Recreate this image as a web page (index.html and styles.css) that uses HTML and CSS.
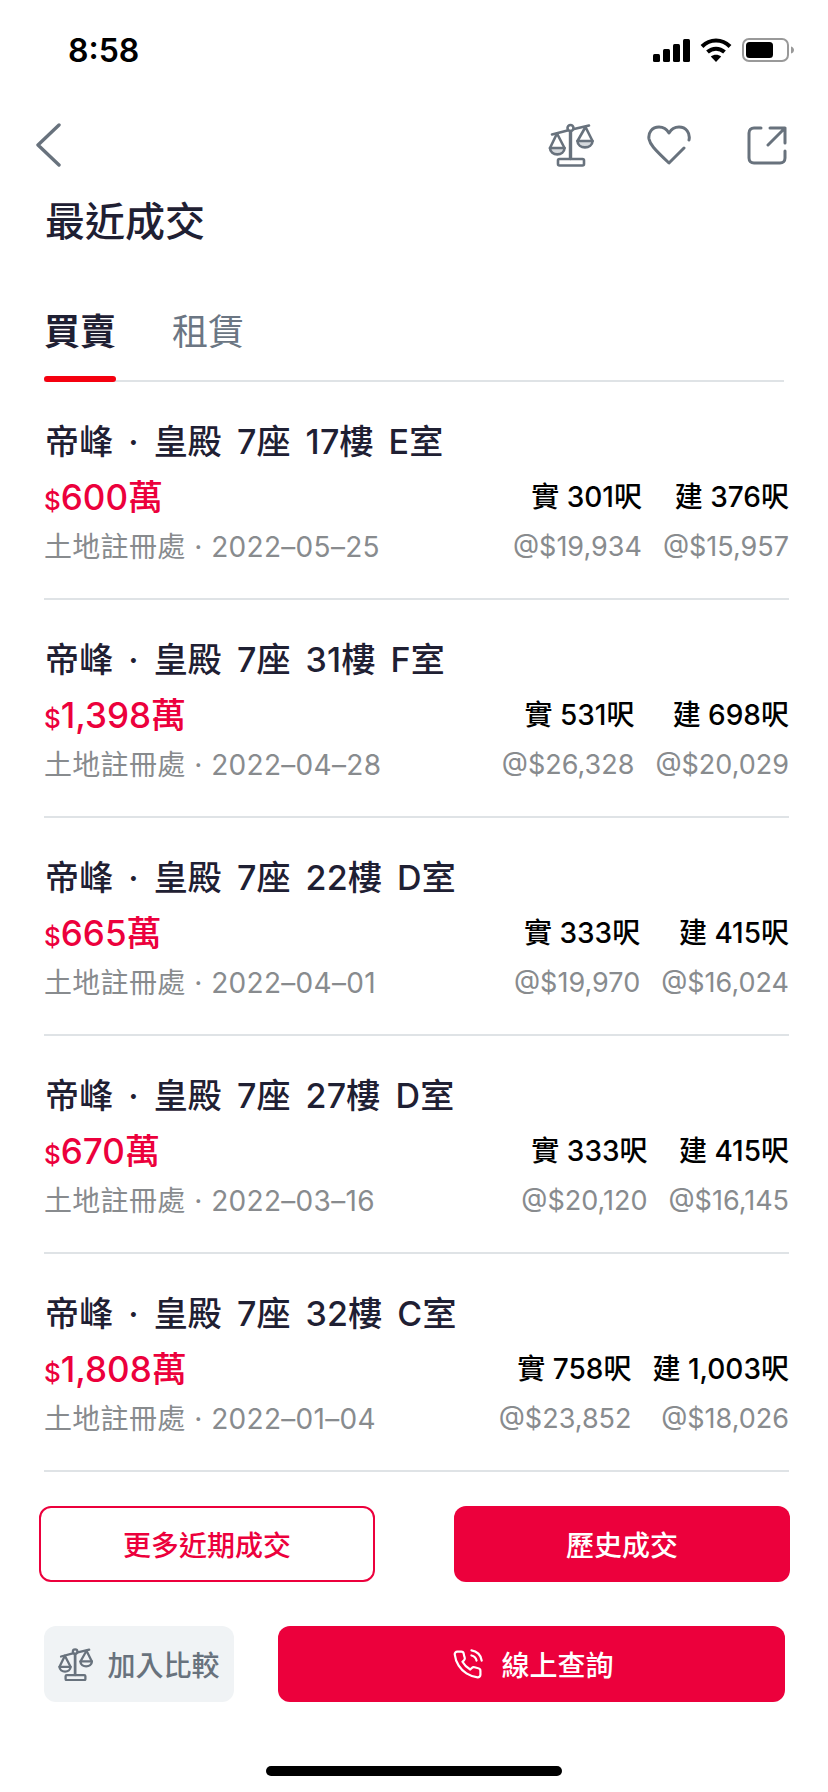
FILE: index.html
```html
<!DOCTYPE html>
<html>
<head>
    <title>最近成交</title>
    <link rel="stylesheet" href="styles.css">
</head>
<body>
    <div class="status-bar">
        <span class="time">8:58</span>
        <div class="status-icons">
            <svg width="37" height="23" viewBox="0 0 37 23" fill="#000">
                <rect x="0" y="15" width="7" height="8" rx="1.5"/>
                <rect x="10" y="10" width="7" height="13" rx="1.5"/>
                <rect x="20" y="5" width="7" height="18" rx="1.5"/>
                <rect x="30" y="0" width="7" height="23" rx="1.5"/>
            </svg>
            <svg width="32" height="24" viewBox="0 0 32 24" fill="none" stroke="#000" stroke-width="4">
                <path d="M2 8.5C10 0.5 22 0.5 30 8.5"/>
                <path d="M7.5 14C12.5 9.5 19.5 9.5 24.5 14"/>
                <path d="M16 24L10.8 18.6C13.8 16 18.2 16 21.2 18.6Z" fill="#000" stroke="none"/>
            </svg>
            <svg width="52" height="24" viewBox="0 0 52 24">
                <rect x="1" y="1" width="45" height="22" rx="6" fill="none" stroke="#999" stroke-width="2"/>
                <rect x="4" y="4" width="27" height="16" rx="3.5" fill="#000"/>
                <path d="M49 8.5C51 9 52 10.5 52 12S51 15 49 15.5Z" fill="#999"/>
            </svg>
        </div>
    </div>

    <div class="nav">
        <svg class="back" width="25" height="44" viewBox="0 0 25 44" fill="none" stroke="#68727d" stroke-width="3.4" stroke-linecap="round" stroke-linejoin="round">
            <path d="M23 2L2 22L23 42"/>
        </svg>
        <div class="nav-icons">
            <svg class="scales" width="46" height="44" viewBox="0 0 46 43" fill="none" stroke="#68727d" stroke-width="2.6" stroke-linejoin="round" stroke-linecap="round">
                <path d="M2 24.5H16.5C16.5 33 2 33 2 24.5Z" fill="#d5d9dd"/>
                <path d="M29.5 17.5H44.5C44.5 26 29.5 26 29.5 17.5Z" fill="#d5d9dd"/>
                <path d="M2 24.5L9 10L16.5 24.5M29.5 17.5L37.5 3.5L44.5 17.5"/>
                <path d="M4 11L19.5 7M26 5.5L41 2"/>
                <circle cx="22.5" cy="4.5" r="3"/>
                <path d="M22.5 8V35" stroke-width="3.4"/>
                <rect x="10" y="35.5" width="26" height="6.5" rx="1.5"/>
            </svg>
            <svg width="44" height="40" viewBox="0 0 44 40" fill="none" stroke="#68727d" stroke-width="3" stroke-linecap="round" stroke-linejoin="round">
                <path d="M42 15C43.5 8 39 2 32 2C27.5 2 24 4.5 22 8C20 4.5 16.5 2 12 2C5 2 1 7.5 2 14C3 19 6 23 22 38L37 23"/>
            </svg>
            <svg width="40" height="39" viewBox="0 0 40 39" fill="none" stroke="#68727d" stroke-width="3" stroke-linecap="round" stroke-linejoin="round">
                <path d="M14 2H7C4 2 2 4 2 7V32C2 35 4 37 7 37H33C36 37 38 35 38 32V25"/>
                <path d="M23 2H38V17M38 2L21 19"/>
            </svg>
        </div>
    </div>

    <h1 class="page-title">最近成交</h1>

    <div class="tabs">
        <span class="tab active">買賣</span>
        <span class="tab">租賃</span>
    </div>

    <div class="deal-list">
        <div class="deal">
            <div class="deal-title">帝峰 · 皇殿 7座 17樓 E室</div>
            <div class="deal-info">
                <div class="price"><small>$</small>600萬</div>
                <div class="area">實 301呎</div>
                <div class="area">建 376呎</div>
                <div class="source">土地註冊處 · 2022–05–25</div>
                <div class="per-foot">@$19,934</div>
                <div class="per-foot">@$15,957</div>
            </div>
        </div>
        <div class="deal">
            <div class="deal-title">帝峰 · 皇殿 7座 31樓 F室</div>
            <div class="deal-info">
                <div class="price"><small>$</small>1,398萬</div>
                <div class="area">實 531呎</div>
                <div class="area">建 698呎</div>
                <div class="source">土地註冊處 · 2022–04–28</div>
                <div class="per-foot">@$26,328</div>
                <div class="per-foot">@$20,029</div>
            </div>
        </div>
        <div class="deal">
            <div class="deal-title">帝峰 · 皇殿 7座 22樓 D室</div>
            <div class="deal-info">
                <div class="price"><small>$</small>665萬</div>
                <div class="area">實 333呎</div>
                <div class="area">建 415呎</div>
                <div class="source">土地註冊處 · 2022–04–01</div>
                <div class="per-foot">@$19,970</div>
                <div class="per-foot">@$16,024</div>
            </div>
        </div>
        <div class="deal">
            <div class="deal-title">帝峰 · 皇殿 7座 27樓 D室</div>
            <div class="deal-info">
                <div class="price"><small>$</small>670萬</div>
                <div class="area">實 333呎</div>
                <div class="area">建 415呎</div>
                <div class="source">土地註冊處 · 2022–03–16</div>
                <div class="per-foot">@$20,120</div>
                <div class="per-foot">@$16,145</div>
            </div>
        </div>
        <div class="deal">
            <div class="deal-title">帝峰 · 皇殿 7座 32樓 C室</div>
            <div class="deal-info">
                <div class="price"><small>$</small>1,808萬</div>
                <div class="area">實 758呎</div>
                <div class="area">建 1,003呎</div>
                <div class="source">土地註冊處 · 2022–01–04</div>
                <div class="per-foot">@$23,852</div>
                <div class="per-foot">@$18,026</div>
            </div>
        </div>
    </div>

    <div class="more-actions">
        <button class="btn btn-outline">更多近期成交</button>
        <button class="btn btn-red">歷史成交</button>
    </div>

    <div class="bottom-actions">
        <button class="btn btn-compare">
            <svg width="35" height="33" viewBox="0 0 46 43" fill="none" stroke="#68727d" stroke-width="3" stroke-linejoin="round" stroke-linecap="round">
                <path d="M2 24.5H16.5C16.5 33 2 33 2 24.5Z"/>
                <path d="M29.5 17.5H44.5C44.5 26 29.5 26 29.5 17.5Z"/>
                <path d="M2 24.5L9 10L16.5 24.5M29.5 17.5L37.5 3.5L44.5 17.5"/>
                <path d="M4 11L19.5 7M26 5.5L41 2"/>
                <circle cx="22.5" cy="4.5" r="3"/>
                <path d="M22.5 8V35" stroke-width="3.6"/>
                <rect x="10" y="35.5" width="26" height="6.5" rx="1.5"/>
            </svg>
            加入比較
        </button>
        <button class="btn btn-red btn-enquiry">
            <svg width="31" height="31" viewBox="0 0 24 24" fill="none" stroke="#fff" stroke-width="1.7" stroke-linecap="round" stroke-linejoin="round">
                <path d="M15.05 5A5 5 0 0 1 19 8.95M15.05 1A9 9 0 0 1 23 8.94m-1 7.98v3a2 2 0 0 1-2.18 2 19.79 19.79 0 0 1-8.63-3.07 19.5 19.5 0 0 1-6-6 19.79 19.79 0 0 1-3.07-8.67A2 2 0 0 1 4.11 2h3a2 2 0 0 1 2 1.72 12.84 12.84 0 0 0 .7 2.81 2 2 0 0 1-.45 2.11L8.09 9.91a16 16 0 0 0 6 6l1.27-1.27a2 2 0 0 1 2.11-.45 12.84 12.84 0 0 0 2.81.7A2 2 0 0 1 22 16.92z"/>
            </svg>
            線上查詢
        </button>
    </div>

    <div class="home-bar"></div>
</body>
</html>
```

FILE: styles.css
```css
body {
    font-family: 'Inter', 'Noto Sans CJK TC', sans-serif;
    background-color: #ffffff;
    color: #1f2033;
    margin: 0;
    padding: 0;
    width: 828px;
    height: 1792px;
    overflow: hidden;
}

.status-bar {
    height: 100px;
    padding: 0 34px 0 68px;
    display: flex;
    align-items: center;
    justify-content: space-between;
    box-sizing: border-box;
}

.time {
    font-size: 32px;
    font-weight: 600;
    color: #000;
}

.status-icons {
    display: flex;
    align-items: center;
    gap: 10px;
}

.nav {
    margin-top: 23px;
    height: 44px;
    padding: 0 41px 0 36px;
    display: flex;
    align-items: center;
    justify-content: space-between;
}

.nav-icons {
    display: flex;
    align-items: center;
    gap: 56px;
}

.scales {
    margin-right: -3px;
}

.page-title {
    margin: 31px 0 0;
    padding-left: 45px;
    font-size: 40px;
    line-height: 48px;
    font-weight: 500;
}

.tabs {
    margin: 42px 44px 0;
    height: 94px;
    display: flex;
    gap: 56px;
    border-bottom: 2px solid #dfe3e6;
    box-sizing: border-box;
}

.tab {
    position: relative;
    font-size: 36px;
    line-height: 89px;
    width: 72px;
    text-align: center;
    color: #6b7683;
}

.tab.active {
    color: #1f2033;
    font-weight: 700;
}

.tab.active::after {
    content: "";
    position: absolute;
    left: 0;
    right: 0;
    bottom: -2px;
    height: 6px;
    border-radius: 3px;
    background-color: #f5000f;
}

.deal-list {
    margin: 0 39px 0 44px;
}

.deal {
    height: 218px;
    padding-top: 38px;
    border-bottom: 2px solid #dfe3e6;
    box-sizing: border-box;
}

.deal-title {
    font-size: 34px;
    line-height: 44px;
    font-weight: 500;
    padding-left: 1px;
    word-spacing: 5.6px;
    letter-spacing: 0.2px;
}

.deal-info {
    margin-top: 8px;
    display: grid;
    grid-template-columns: 1fr auto auto;
    grid-template-rows: 54px 42px;
    column-gap: 21px;
    align-items: start;
    text-align: right;
}

.price {
    font-size: 35px;
    line-height: 50px;
    font-weight: 500;
    color: #ec003c;
    text-align: left;
}

.price small {
    font-size: 26px;
}

.area {
    font-size: 28px;
    line-height: 51px;
    font-weight: 500;
    color: #000;
}

.source {
    font-size: 28px;
    line-height: 42px;
    letter-spacing: 0.3px;
    word-spacing: 0.5px;
    color: #888b8e;
    text-align: left;
}

.per-foot {
    font-size: 27px;
    line-height: 42px;
    color: #888b8e;
}

.btn {
    border: none;
    font-family: inherit;
    font-size: 28px;
    font-weight: 500;
    border-radius: 12px;
    height: 76px;
    display: flex;
    align-items: center;
    justify-content: center;
    padding: 0;
}

.btn-red {
    background-color: #ec003c;
    color: #fff;
}

.btn-outline {
    background-color: #fff;
    color: #ec003c;
    border: 2px solid #ec003c;
}

.more-actions {
    margin: 34px 38px 0 39px;
    display: flex;
    justify-content: space-between;
}

.more-actions .btn {
    width: 336px;
}

.bottom-actions {
    margin: 44px 43px 0 44px;
    display: flex;
    gap: 44px;
}

.btn-compare {
    width: 190px;
    background-color: #f0f3f5;
    color: #68727d;
    gap: 14px;
}

.btn-enquiry {
    flex: 1;
    gap: 18px;
    padding-left: 3px;
}

.home-bar {
    width: 296px;
    height: 10px;
    margin: 64px auto 0;
    border-radius: 5px;
    background-color: #000;
}
```
